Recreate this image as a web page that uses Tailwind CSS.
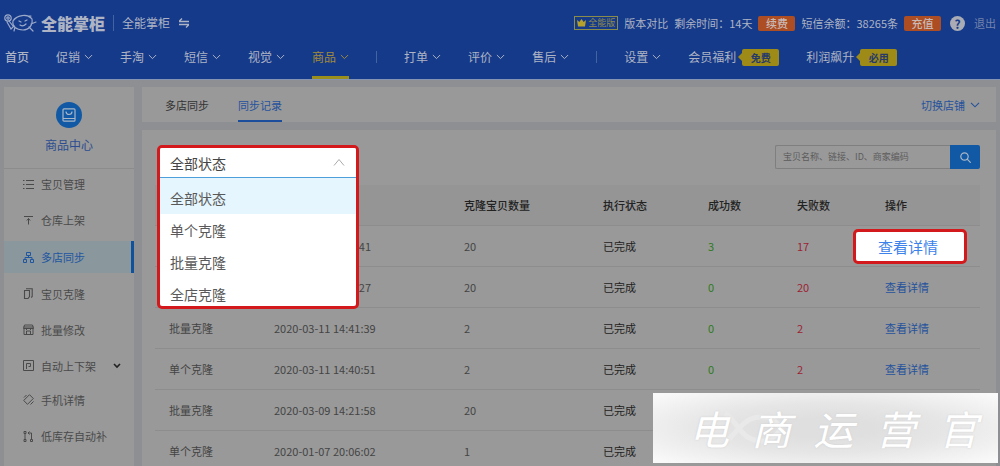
<!DOCTYPE html>
<html lang="zh-CN">
<head>
<meta charset="utf-8">
<meta name="viewport" content="width=device-width, initial-scale=1">
<title>同步记录 - 全能掌柜</title>
<script src="https://cdn.jsdelivr.net/npm/@tailwindcss/browser@4"></script>
</head>
<body class="relative flex h-screen flex-col overflow-hidden bg-[#8e8f92] font-['Noto_Sans_CJK_SC',sans-serif] text-[11px] leading-4 text-[#444]">

<svg class="hidden">
  <symbol id="down" viewBox="0 0 10 6"><path d="M1 .8l4 4 4-4" fill="none" stroke="currentColor" stroke-width="1.1"/></symbol>
</svg>

<header class="shrink-0 border-b border-[#8694b3] bg-[#153a8a] pt-[11px] text-[#aeb4c4]">
  <div class="flex h-6 items-center justify-between pl-1 pr-1">
    <div class="flex items-center">
      <svg class="h-5 w-[33px]" viewBox="0 0 33 20" fill="none" stroke="#9ba9c9" stroke-width="1.2" stroke-linecap="round">
        <circle cx="4" cy="5" r="3.2"/><circle cx="4" cy="5" r="1.2"/>
        <path d="M3 9l4 7 3-3M5 8l4 5"/>
        <path d="M9 8c3-6 15-8 19-2 1 6-3 11-9 11-7 0-11-4-10-9zM10 7c4-5 12-6 17-2M24 3l3 0M27 11l5-2M11 14l-1 4M25 14l4 4M15 8l2 1M21 8l2-1M16 12q3 2 6-1"/>
      </svg>
      <span class="ml-1 text-[16px] font-black leading-5">全能掌柜</span>
      <span class="ml-2 h-4 w-px bg-[#4563a3]"></span>
      <span class="ml-2 text-[12px]">全能掌柜</span>
      <svg class="ml-[9px] h-2.5 w-2.5" viewBox="0 0 10 10" fill="none" stroke="currentColor" stroke-width="1.3"><path d="M0 3.5h10M3 .5l-3 3M0 6.5h10M7 9.5l3-3"/></svg>
    </div>
    <div class="flex items-center gap-1.5">
      <span class="flex h-[14px] items-center gap-0.5 border border-[#8a8c4c] px-0.5 text-[9px] leading-3 text-[#8e8a4e]">
        <svg class="h-2 w-[9px]" viewBox="0 0 9 8" fill="#b5a02c"><path d="M0 1l2.3 2L4.5 0l2.2 3L9 1 8 7.500H1z"/></svg>全能版</span>
      <a href="#">版本对比</a>
      <span>剩余时间：14天</span>
      <button class="h-[15px] w-[37px] rounded-xs bg-[#ad4d24] font-medium leading-[15px] text-[#c9b9b4]">续费</button>
      <span>短信余额：38265条</span>
      <button class="h-[15px] w-[37px] rounded-xs bg-[#ad4d24] font-medium leading-[15px] text-[#c9b9b4]">充值</button>
      <button aria-label="帮助" class="mx-[3px] h-[15px] w-[15px] rounded-full bg-[#a9acb5] text-[12px] font-bold leading-[15px] text-[#153a8a]">?</button>
      <a href="#" class="text-[#7383ac]">退出</a>
    </div>
  </div>
  <nav class="flex h-11 items-center gap-[27px] pl-[5px] text-[12px]">
    <a href="#" class="font-medium">首页</a>
    <a href="#" class="flex items-center gap-1">促销<svg class="h-1.5 w-[9px]"><use href="#down"/></svg></a>
    <a href="#" class="flex items-center gap-1">手淘<svg class="h-1.5 w-[9px]"><use href="#down"/></svg></a>
    <a href="#" class="flex items-center gap-1">短信<svg class="h-1.5 w-[9px]"><use href="#down"/></svg></a>
    <a href="#" class="flex items-center gap-1">视觉<svg class="h-1.5 w-[9px]"><use href="#down"/></svg></a>
    <a href="#" class="flex h-11 items-center gap-1 border-y-3 border-t-transparent border-b-[#9a8e1c] text-[#a08b3a]">商品<svg class="h-1.5 w-[9px]"><use href="#down"/></svg></a>
    <span class="h-3 w-px bg-[#4563a3]"></span>
    <a href="#" class="flex items-center gap-1">打单<svg class="h-1.5 w-[9px]"><use href="#down"/></svg></a>
    <a href="#" class="flex items-center gap-1">评价<svg class="h-1.5 w-[9px]"><use href="#down"/></svg></a>
    <a href="#" class="flex items-center gap-1">售后<svg class="h-1.5 w-[9px]"><use href="#down"/></svg></a>
    <span class="h-3 w-px bg-[#4563a3]"></span>
    <a href="#" class="flex items-center gap-1">设置<svg class="h-1.5 w-[9px]"><use href="#down"/></svg></a>
    <a href="#" class="flex items-center">会员福利<span class="ml-0.5 border-4 border-l-0 border-transparent border-r-[#9d8a17]"></span><span class="h-[17px] w-[37px] rounded-xs bg-[#9d8a17] text-center text-[10px] font-bold leading-[17px] text-[#27396b]">免费</span></a>
    <a href="#" class="flex items-center">利润飙升<span class="ml-0.5 border-4 border-l-0 border-transparent border-r-[#9d8a17]"></span><span class="h-[17px] w-[37px] rounded-xs bg-[#9d8a17] text-center text-[10px] font-bold leading-[17px] text-[#27396b]">必用</span></a>
  </nav>
</header>

<div class="flex min-h-0 flex-1 gap-2 px-1 pt-[7px]">
  <aside class="w-[130px] shrink-0 bg-[#999]">
    <div class="flex h-[82px] flex-col items-center border-b border-[#8c8c8c] pt-[15px]">
      <span class="flex h-[26px] w-[26px] items-center justify-center rounded-full bg-[#1159a5]">
        <svg class="h-[14px] w-[14px]" viewBox="0 0 14 14" fill="none" stroke="#a9b6c6" stroke-width="1.200"><rect x="1" y=".8" width="12" height="12.400" rx="1"/><path d="M4 3.500c0 4 6 4 6 0M1 10.500h12"/></svg>
      </span>
      <a href="#" class="mt-[9px] text-[12px] text-[#2c4d90]">商品中心</a>
    </div>
    <ul class="flex flex-col gap-[5px] text-[#4a4a4a]">
      <li><a href="#" class="flex h-[30px] items-center gap-[7px] pl-[19px]"><svg class="h-[11px] w-[11px]" viewBox="0 0 11 11" stroke="currentColor"><path d="M0 1.500h1.500M3 1.500h8M0 5.500h1.500M3 5.500h8M0 9.500h1.500M3 9.500h8"/></svg>宝贝管理</a></li>
      <li><a href="#" class="flex h-8 items-center gap-[7px] pl-[19px]"><svg class="h-[11px] w-[11px]" viewBox="0 0 11 11" fill="none" stroke="currentColor"><path d="M1 1.500h9M5.500 3.500v6M3.800 5.500l1.700-2 1.700 2"/></svg>仓库上架</a></li>
      <li><a href="#" class="flex h-8 items-center gap-[7px] border-r-3 border-[#10519c] bg-[#8a979d] pl-[19px] text-[#1e56a0]"><svg class="h-[11px] w-[11px]" viewBox="0 0 11 11" fill="none" stroke="currentColor"><path d="M3.500.5h4v3h-4zM.5 7.500h3v3h-3zM7.500 7.500h3v3h-3zM5.500 3.500v2M2 7.500v-2h7v2"/></svg>多店同步</a></li>
      <li><a href="#" class="flex h-[31px] items-center gap-[7px] pl-[19px]"><svg class="h-[11px] w-[11px]" viewBox="0 0 11 11" fill="none" stroke="currentColor" stroke-width="1.100"><path d="M1.500 2.500h5v6l-1.500 2H1.500zM3 .7h6.200v7.800l-1 1"/></svg>宝贝克隆</a></li>
      <li><a href="#" class="flex h-[31px] items-center gap-[7px] pl-[19px]"><svg class="h-[11px] w-[11px]" viewBox="0 0 11 11" fill="none" stroke="currentColor"><path d="M1.500 1h8l1 3.500h-10zM1 4.500v6h9v-6M.5 3h10M3.500 10V7h4v3M3.500 4.500v1.500M7.500 4.500v1.500"/></svg>批量修改</a></li>
      <li><a href="#" class="flex h-[31px] items-center gap-[7px] pl-[19px] pr-[13px]"><svg class="h-[11px] w-[11px]" viewBox="0 0 11 11" fill="none" stroke="currentColor"><path d="M.5.5h10v10H.5zM3.500 9V3.500h4v3h-2"/></svg>自动上下架<svg class="ml-auto h-[6px] w-2 text-[#222]" viewBox="0 0 8 6"><path d="M1 1l3 3 3-3" fill="none" stroke="currentColor" stroke-width="1.600"/></svg></a></li>
      <li><a href="#" class="flex h-[27px] items-center gap-[7px] pl-[19px]"><svg class="h-[11px] w-[11px]" viewBox="0 0 11 11" fill="none" stroke="currentColor"><path d="M6.500.7l3.800 3.800-5.800 5.800L.7 6.500zM1 3.500L3.500 1M7.500 10.500l3-3"/></svg>手机详情</a></li>
      <li><a href="#" class="flex h-9 items-center gap-[7px] pl-[19px]"><svg class="h-[11px] w-[11px]" viewBox="0 0 11 11" fill="none" stroke="currentColor"><path d="M2 2.500v6M1 .5h2v2H1zM1 8.500h2v2H1zM5 2h3.500v6.500M6.500.5L5 2l1.500 1.500M7.500 8.500h2v2h-2z"/></svg>低库存自动补</a></li>
    </ul>
  </aside>

  <main class="flex min-w-0 flex-1 flex-col gap-2">
    <div class="flex h-[35px] shrink-0 items-center justify-between bg-[#999] px-4">
      <div class="flex h-full gap-[29px] pl-[7px]">
        <a href="#" class="flex items-center border-y-2 border-transparent text-[#333]">多店同步</a>
        <a href="#" class="flex items-center border-y-2 border-t-transparent border-b-[#1c4d9c] text-[#25529c]">同步记录</a>
      </div>
      <a href="#" class="flex items-center gap-[5px] text-[#25529c]">切换店铺<svg class="h-1.5 w-2.5"><use href="#down"/></svg></a>
    </div>

    <section class="flex-1 bg-[#999] pl-[13px] pr-4 pt-[15px]">
      <div class="flex h-10 items-start justify-between">
        <div class="relative z-10 w-[204px]">
          <div class="absolute left-0.5 right-0 top-0 overflow-hidden rounded-[5px] border-3 border-[#d3191b] bg-white text-[14px] text-[#595959]">
            <div class="relative border-b border-[#4c9fd8]">
              <select aria-label="状态" class="block h-[29px] w-full appearance-none bg-white pl-2.5 text-[#444] outline-none">
                <option selected>全部状态</option><option>单个克隆</option><option>批量克隆</option><option>全店克隆</option>
              </select>
              <svg class="pointer-events-none absolute right-[11px] top-[11px] h-[7px] w-3 text-[#aaa]" viewBox="0 0 12 7"><path d="M1 6.500l5-6 5 6" fill="none" stroke="currentColor"/></svg>
            </div>
            <ul class="leading-8">
              <li class="bg-[#e6f6fe] pl-2.5 pt-1">全部状态</li>
              <li class="pl-2.5">单个克隆</li>
              <li class="pl-2.5">批量克隆</li>
              <li class="-mb-1 pl-2.5">全店克隆</li>
            </ul>
          </div>
        </div>
        <form class="flex h-6 w-[205px]">
          <input type="text" aria-label="搜索" placeholder="宝贝名称、链接、ID、商家编码" class="min-w-0 flex-1 rounded-l-xs border border-r-0 border-[#7f7f7f] pl-[7px] text-[9px] outline-none placeholder:text-[#5c5c5c]">
          <button type="button" aria-label="搜索" class="flex w-[30px] items-center justify-center rounded-r-xs bg-[#1159a5]"><svg class="h-[11px] w-[11px]" viewBox="0 0 11 11" fill="none" stroke="#a9b6c6" stroke-width="1.200"><circle cx="4.500" cy="4.500" r="3.700"/><path d="M7.200 7.200l3.500 3.500"/></svg></button>
        </form>
      </div>

      <table class="w-full table-fixed border-separate border-spacing-0 text-left [&_td]:h-[41px] [&_td]:border-b [&_td]:border-[#8d8d8d] [&_td]:p-0 [&_td]:pl-[14px] [&_th]:h-[41px] [&_th]:border-b [&_th]:border-[#8d8d8d] [&_th]:bg-[#959595] [&_th]:p-0 [&_th]:pl-[14px] [&_th]:font-medium [&_th]:text-[#222]">
        <colgroup><col class="w-[105px]"><col class="w-[190px]"><col class="w-[139px]"><col class="w-[105px]"><col class="w-[89px]"><col class="w-[88px]"><col></colgroup>
        <thead><tr><th></th><th></th><th>克隆宝贝数量</th><th>执行状态</th><th>成功数</th><th>失败数</th><th>操作</th></tr></thead>
        <tbody>
          <tr><td></td><td><span class="block w-[97px] text-right">41</span></td><td>20</td><td class="text-[#222]">已完成</td><td class="text-[#2f7a22]">3</td><td class="text-[#9c1f33]">17</td><td class="relative"><a href="#" class="absolute -left-[18px] top-[3px] flex h-[35px] w-[114px] items-center justify-center rounded-[5px] border-3 border-[#d3191b] bg-white pr-1 text-[15px] text-[#3c82ea]">查看详情</a></td></tr>
          <tr><td></td><td><span class="block w-[97px] text-right">27</span></td><td>20</td><td class="text-[#222]">已完成</td><td class="text-[#2f7a22]">0</td><td class="text-[#9c1f33]">20</td><td><a href="#" class="text-[#25529c]">查看详情</a></td></tr>
          <tr><td>批量克隆</td><td>2020-03-11 14:41:39</td><td>2</td><td class="text-[#222]">已完成</td><td class="text-[#2f7a22]">0</td><td class="text-[#9c1f33]">2</td><td><a href="#" class="text-[#25529c]">查看详情</a></td></tr>
          <tr><td>单个克隆</td><td>2020-03-11 14:40:51</td><td>2</td><td class="text-[#222]">已完成</td><td class="text-[#2f7a22]">0</td><td class="text-[#9c1f33]">2</td><td><a href="#" class="text-[#25529c]">查看详情</a></td></tr>
          <tr><td>批量克隆</td><td>2020-03-09 14:21:58</td><td>20</td><td class="text-[#222]">已完成</td><td></td><td></td><td></td></tr>
          <tr><td>单个克隆</td><td>2020-01-07 20:06:02</td><td>1</td><td class="text-[#222]">已完成</td><td></td><td></td><td></td></tr>
        </tbody>
      </table>
    </section>
  </main>
</div>

<div class="absolute bottom-[3px] right-0.5 z-20 flex h-[70px] w-[345px] items-center justify-between bg-[radial-gradient(ellipse_at_center,#dfdfdf_20%,#e6e6e6_50%,#f9f9f9_95%)] pl-9 pr-5 text-[40px] leading-none text-white [text-shadow:0_0_2px_#ccc]">
  <svg class="absolute left-[68px] top-[18px] h-9 w-[170px]" viewBox="0 0 170 36" fill="none" stroke="#e9e9e9" stroke-width="5"><path d="M4 2c12 8 16 28 36 28 10 0 16-6 20-12-4-8-10-12-20-12C22 6 16 22 4 32"/></svg>
  <span class="relative italic">电</span><span class="relative italic">商</span><span class="relative italic">运</span><span class="relative italic">营</span><span class="relative italic">官</span>
</div>
</body>
</html>
